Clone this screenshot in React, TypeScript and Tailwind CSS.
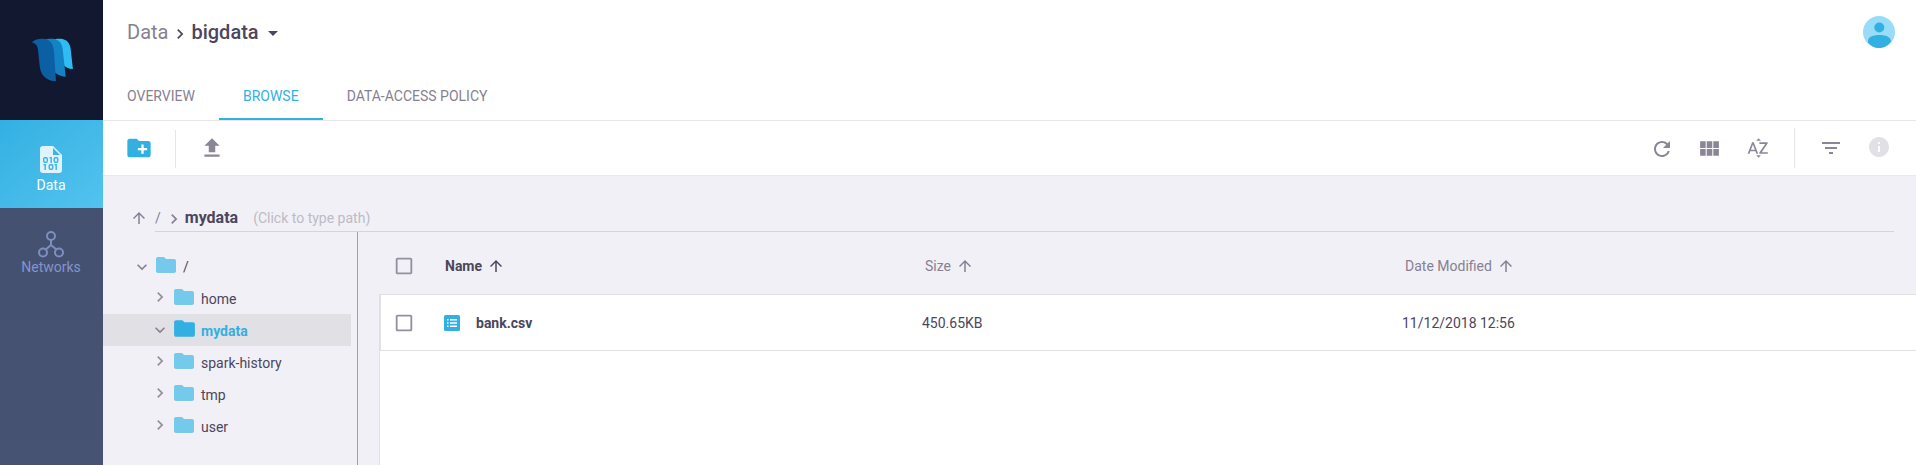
import React from "react";
import {
  MdCreateNewFolder, MdFileUpload, MdRefresh, MdViewModule, MdSortByAlpha, MdFilterList, MdInfo,
  MdArrowUpward, MdChevronRight, MdExpandMore, MdFolder, MdCheckBoxOutlineBlank, MdArrowDropDown,
} from "react-icons/md";

function Logo() {
  return (
    <svg className="h-[44px] w-[43px]" viewBox="0 0 43 44">
      <path d="M22 2C25 0.700 29 0.500 32.300 1.300C37.500 2.700 39.500 7 39.900 13L41.900 31C38 31 34 29.500 31.500 26Z" fill="#2ebcf2" />
      <path d="M13 2C16 0.700 21 0.500 24 1.200C29.500 2.500 31.600 7 32 14L34.700 38.700C30 38.500 25.500 36.500 21 32Z" fill="#1483c6" />
      <path d="M0.800 4.500C4 1 9 0.500 14 1C20 2 22.600 7 23 14L25 43.300C20 43.300 16 41.500 13 38.500C9.800 35 9 31 8.600 27L7 12C6.700 7.500 4.500 5 0.800 4.500Z" fill="#0c5fa3" />
    </svg>
  );
}

function DataIcon() {
  return (
    <svg className="h-[27px] w-[22px]" viewBox="0 0 22 27">
      <path d="M3 0H13L22 9V24A3 3 0 0 1 19 27H3A3 3 0 0 1 0 24V3A3 3 0 0 1 3 0Z" fill="#dff3fc" />
      <path d="M13 2V9H20Z" fill="#3ab4e6" />
      <g fill="none" stroke="#3ab4e6" strokeWidth="1.4">
        <rect x="3.700" y="11.700" width="3.600" height="4.600" rx="1.200" />
        <path d="M9.500 11.700H11.200V17" />
        <rect x="14.200" y="11.700" width="3.600" height="4.600" rx="1.200" />
        <path d="M3.500 18.700H5.200V24" />
        <rect x="9.200" y="18.700" width="3.600" height="4.600" rx="1.200" />
        <path d="M14.500 18.700H16.200V24" />
      </g>
    </svg>
  );
}

function NetworkIcon() {
  return (
    <svg className="h-[27px] w-[26px]" viewBox="0 0 26 27" fill="none" stroke="#7d8fc0" strokeWidth="2">
      <circle cx="13" cy="5" r="4" />
      <circle cx="5" cy="21.500" r="4" />
      <circle cx="21" cy="21.500" r="4" />
      <path d="M13 9V14L7.700 18.500M13 14L18.300 18.500" />
    </svg>
  );
}

function Avatar() {
  return (
    <svg className="size-8" viewBox="0 0 32 32">
      <circle cx="16" cy="16" r="16" fill="#99dcf8" />
      <circle cx="16.300" cy="11.500" r="5" fill="#32b0e2" />
      <path d="M5 25C5 21 10 19 16.300 19S28 21 28 25.500C25 30 20.500 32 16 32S7.500 30 5 26.500Z" fill="#32b0e2" />
    </svg>
  );
}

function CsvIcon() {
  return (
    <svg className="size-4" viewBox="0 0 16 16">
      <rect width="16" height="16" rx="1.500" fill="#32b0e2" />
      <path d="M3 4h1.500v1.500H3zM6 4h7v1.500H6zM3 7.200h1.500v1.500H3zM6 7.200h7v1.500H6zM3 10.400h1.500v1.500H3zM6 10.400h7v1.500H6z" fill="#fff" />
    </svg>
  );
}

const folders = [
  { name: "home" },
  { name: "mydata", active: true },
  { name: "spark-history" },
  { name: "tmp" },
  { name: "user" },
];

function Tree() {
  return (
    <div className="w-[254px] shrink-0 pt-[18px]">
      <div className="flex h-8 items-center pl-[29px]">
        <MdExpandMore className="mt-[1px] size-5 text-[#858192]" />
        <MdFolder className="-mt-[2px] ml-[2px] size-6 text-[#75c9ea]" />
        <span className="ml-[5px] mt-[2px]">/</span>
      </div>
      {folders.map((f) => (
        <div key={f.name} className={f.active ? "mr-[6px] flex h-8 items-center bg-[#e1e0e4] pl-[47px]" : "mr-[6px] flex h-8 items-center pl-[47px]"}>
          {f.active ? <MdExpandMore className="size-5 text-[#858192]" /> : <MdChevronRight className="-mt-[2px] size-5 text-[#9390a0]" />}
          <MdFolder className={f.active ? "ml-[2px] -mt-[3px] size-[25px] text-[#32b0e2]" : "ml-[2px] -mt-[3px] size-6 text-[#75c9ea]"} />
          <span className={f.active ? "mt-px ml-1 font-bold text-[#32b0e2]" : "mt-px ml-[5px]"}>{f.name}</span>
        </div>
      ))}
    </div>
  );
}

export default function App() {
  return (
    <div className="flex h-[465px] w-full overflow-hidden bg-white font-['Roboto',sans-serif] text-sm leading-5 text-[#4b465d]">
      <aside className="flex w-[103px] shrink-0 flex-col bg-linear-to-b from-[#414e6e] to-[#465373]">
        <div className="h-[120px] shrink-0 bg-[#111830] pt-[38px] pl-[31px]"><Logo /></div>
        <div className="flex h-[88px] shrink-0 flex-col items-center bg-linear-to-br from-[#32b0e2] to-[#52c3ef] pt-[26px] pr-px text-white">
          <DataIcon />
          <span className="mt-[2px]">Data</span>
        </div>
        <div className="flex flex-col items-center pt-[23px] pr-px text-[#8494cc]">
          <NetworkIcon />
          <span className="-mt-px">Networks</span>
        </div>
      </aside>

      <main className="flex min-w-0 flex-1 flex-col">
        <header className="flex h-[121px] shrink-0 flex-col justify-between border-b border-[#e6e5e9]">
          <div className="flex justify-between pr-[21px] pl-6">
            <div className="flex h-16 items-center text-xl">
              <span className="text-[#858192]">Data</span>
              <MdChevronRight className="mt-1 ml-0.5 size-5" />
              <span className="ml-px font-medium">bigdata</span>
              <MdArrowDropDown className="mt-0.5 ml-0.5 size-6" />
            </div>
            <div className="pt-4"><Avatar /></div>
          </div>
          <nav className="flex h-[50px] text-[#858192]">
            <span className="px-6 pt-4">OVERVIEW</span>
            <span className="border-b-2 border-[#32b0e2] px-6 pt-4 text-[#32b0e2]">BROWSE</span>
            <span className="px-6 pt-4">DATA-ACCESS POLICY</span>
          </nav>
        </header>

        <div className="flex h-[55px] shrink-0 items-center justify-between border-b border-[#e9e8ed] pr-[25px] pl-[22px] text-[#8a8696]">
          <div className="flex items-center">
            <MdCreateNewFolder className="size-7 text-[#32b0e2]" />
            <span className="mt-0.5 ml-[22px] h-[38px] w-px bg-[#e6e5e9]" />
            <MdFileUpload className="ml-[23px] size-[26px]" />
          </div>
          <div className="flex items-center">
            <MdRefresh className="mt-0.5 size-6" />
            <MdViewModule className="ml-[23px] size-[25px]" />
            <MdSortByAlpha className="ml-6 size-6" />
            <span className="ml-6 h-10 w-px bg-[#e6e5e9]" />
            <MdFilterList className="ml-6 size-6" />
            <MdInfo className="-mt-0.5 ml-6 size-6 text-[#e1e0e6]" />
          </div>
        </div>

        <div className="flex min-h-0 flex-1 flex-col bg-[#f1f0f6]">
          <div className="flex h-[56px] shrink-0 pr-[22px] pl-[27px]">
            <MdArrowUpward className="mt-[33px] size-[18px] text-[#858192]" />
            <div className="ml-[7px] flex flex-1 items-start border-b border-[#d5d4db] pt-[32px]">
              <span className="text-[#858192]">/</span>
              <MdChevronRight className="mt-px ml-[3px] size-5 text-[#858192]" />
              <span className="ml-px text-base leading-5 font-bold">mydata</span>
              <span className="ml-[15px] text-[#bdbbc5]">(Click to type path)</span>
            </div>
          </div>
          <div className="flex min-h-0 flex-1">
            <Tree />
            <div className="flex min-w-0 flex-1 flex-col border-l border-[#a19fa8] pl-[21px]">
              <div className="flex h-[62px] shrink-0 items-center pt-[6px] pl-[14px] text-[#858192]">
                <MdCheckBoxOutlineBlank className="size-[22px] text-[#9390a0]" />
                <div className="ml-[30px] flex w-[480px] items-center font-bold text-[#4b465d]">Name<MdArrowUpward className="ml-[5px] size-[18px]" /></div>
                <div className="flex w-[480px] items-center">Size<MdArrowUpward className="ml-[5px] size-[18px]" /></div>
                <div className="flex items-center">Date Modified<MdArrowUpward className="ml-[5px] size-[18px]" /></div>
              </div>
              <div className="flex-1 border-l border-[#e1e0e4] bg-white">
                <div className="flex h-[57px] items-center border-y border-l border-[#e1e0e4] pl-3">
                  <MdCheckBoxOutlineBlank className="size-[22px] text-[#9390a0]" />
                  <div className="ml-[29px] flex w-[478px] items-center font-bold"><CsvIcon /><span className="ml-4">bank.csv</span></div>
                  <div className="w-[480px]">450.65KB</div>
                  <div>11/12/2018 12:56</div>
                </div>
              </div>
            </div>
          </div>
        </div>
      </main>
    </div>
  );
}
